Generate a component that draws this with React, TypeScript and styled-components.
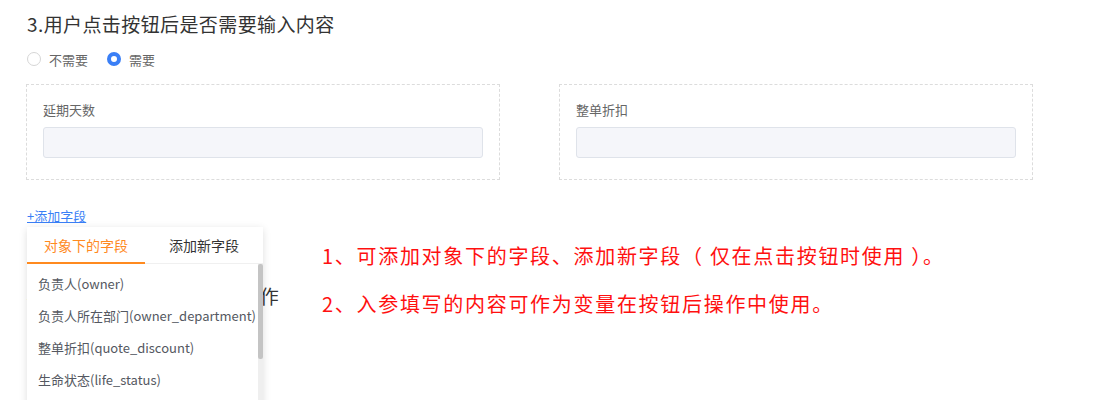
import React, { useState } from 'react';
import styled, { createGlobalStyle } from 'styled-components';

const GlobalStyle = createGlobalStyle`
  html, body {
    margin: 0;
    padding: 0;
    background: #fff;
    font-family: "Noto Sans CJK SC", "Noto Sans", sans-serif;
    overflow: hidden;
  }
`;

const Page = styled.div`
  width: 1099px;
  height: 400px;
  padding: 11px 0 0 26px;
  box-sizing: border-box;
  overflow: hidden;
`;

const Title = styled.div`
  font-size: 19px;
  line-height: 26px;
  color: #333;
  padding-left: 1px;
  letter-spacing: 0.4px;
`;

const RadioRow = styled.div`
  display: flex;
  align-items: center;
  margin-top: 12px;
  height: 20px;
  padding-left: 1px;
`;

const RadioItem = styled.label`
  display: flex;
  align-items: center;
  gap: 8px;
  margin-right: 19px;
  font-size: 13px;
  color: #666;
`;

const RadioDot = styled.span<{ checked: boolean }>`
  width: 14px;
  height: 14px;
  border-radius: 50%;
  box-sizing: border-box;
  background: #fff;
  border: ${p => (p.checked ? '4px solid #3a7ff6' : '1px solid #d6d6d6')};
`;

const FieldGrid = styled.div`
  display: grid;
  grid-template-columns: 474px 474px;
  column-gap: 59px;
  margin-top: 15px;
`;

const FieldBox = styled.div`
  border: 1px dashed #dcdcdc;
  padding: 16px 16px 21px;
  display: flex;
  flex-direction: column;
  gap: 8px;
`;

const FieldLabel = styled.div`
  font-size: 13px;
  line-height: 18px;
  color: #666;
`;

const FieldInput = styled.div`
  height: 31px;
  box-sizing: border-box;
  border: 1px solid #dfe3ea;
  border-radius: 3px;
  background: #f5f6fa;
`;

const AddWrap = styled.div`
  position: relative;
  margin-top: 22px;
  width: max-content;
  padding-left: 1px;
`;

const AddLink = styled.a`
  font-size: 13px;
  line-height: 18px;
  color: #3a7ff6;
  text-decoration: underline;
  cursor: pointer;
`;

const Popover = styled.div`
  position: absolute;
  left: 1px;
  top: calc(100% + 1px);
  width: 236px;
  height: 190px;
  background: #fff;
  box-shadow: 0 2px 8px rgba(0, 0, 0, 0.13);
  z-index: 5;
  display: flex;
  flex-direction: column;
`;

const Tabs = styled.div`
  display: grid;
  grid-template-columns: 118px 118px;
  border-bottom: 1px solid #f0f0f0;
`;

const Tab = styled.div<{ active: boolean }>`
  height: 35px;
  display: flex;
  align-items: center;
  justify-content: center;
  font-size: 14px;
  color: ${p => (p.active ? '#ff8a1f' : '#333')};
  border-bottom: 2px solid ${p => (p.active ? '#ff8a1f' : 'transparent')};
  margin-bottom: -1px;
  cursor: pointer;
`;

const ListArea = styled.div`
  flex: 1;
  display: flex;
  min-height: 0;
`;

const List = styled.div`
  flex: 1;
  padding-top: 4px;
`;

const ListItem = styled.div`
  height: 32px;
  line-height: 32px;
  padding-left: 11px;
  font-size: 13px;
  color: #545861;
  white-space: nowrap;
`;

const Track = styled.div`
  width: 5px;
  background: #efefef;
  display: flex;
  flex-direction: column;
`;

const Thumb = styled.div`
  height: 95px;
  background: #c4c4c4;
  border-radius: 2px;
`;

const Lower = styled.div`
  display: grid;
  grid-template-columns: 296px 1fr;
`;

const NextTitle = styled.div`
  font-size: 19px;
  line-height: 26px;
  color: #333;
  margin-top: 57px;
  padding-left: 1px;
  white-space: nowrap;
  letter-spacing: 0.6px;
`;

const Notes = styled.div`
  margin-top: 6px;
  font-size: 20px;
  line-height: 48px;
  color: #ff1010;
  letter-spacing: 1.7px;
  white-space: nowrap;
`;

const fields = [
  '负责人(owner)',
  '负责人所在部门(owner_department)',
  '整单折扣(quote_discount)',
  '生命状态(life_status)',
  '创建人(created_by)',
];

export default function App() {
  const [need, setNeed] = useState(true);
  const [tab, setTab] = useState(0);

  return (
    <Page>
      <GlobalStyle />
      <Title>3.用户点击按钮后是否需要输入内容</Title>
      <RadioRow>
        <RadioItem onClick={() => setNeed(false)}>
          <RadioDot checked={!need} />
          不需要
        </RadioItem>
        <RadioItem onClick={() => setNeed(true)}>
          <RadioDot checked={need} />
          需要
        </RadioItem>
      </RadioRow>
      <FieldGrid>
        <FieldBox>
          <FieldLabel>延期天数</FieldLabel>
          <FieldInput />
        </FieldBox>
        <FieldBox>
          <FieldLabel>整单折扣</FieldLabel>
          <FieldInput />
        </FieldBox>
      </FieldGrid>
      <AddWrap>
        <AddLink>+添加字段</AddLink>
        <Popover>
          <Tabs>
            <Tab active={tab === 0} onClick={() => setTab(0)}>对象下的字段</Tab>
            <Tab active={tab === 1} onClick={() => setTab(1)}>添加新字段</Tab>
          </Tabs>
          <ListArea>
            <List>
              {fields.map(f => (
                <ListItem key={f}>{f}</ListItem>
              ))}
            </List>
            <Track>
              <Thumb />
            </Track>
          </ListArea>
        </Popover>
      </AddWrap>
      <Lower>
        <NextTitle>4.用户点击按钮后执行的操作</NextTitle>
        <Notes>
          <div>1、可添加对象下的字段、添加新字段（ 仅在点击按钮时使用 ）。</div>
          <div>2、入参填写的内容可作为变量在按钮后操作中使用。</div>
        </Notes>
      </Lower>
    </Page>
  );
}
